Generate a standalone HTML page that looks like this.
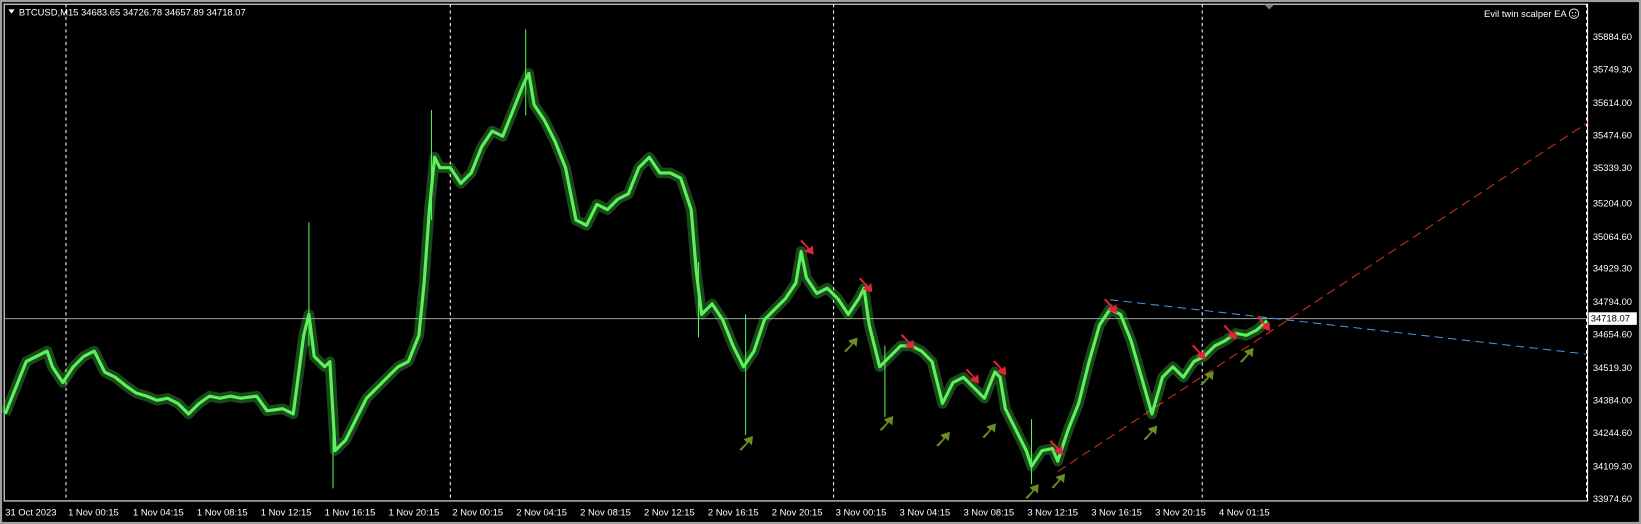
<!DOCTYPE html>
<html><head><meta charset="utf-8"><style>
html,body{margin:0;padding:0;background:#000;overflow:hidden}
svg{display:block}
text{font-family:"Liberation Sans",sans-serif;font-size:9px;fill:#fff}
</style></head><body>
<svg width="1641" height="524" viewBox="0 0 1567 500" preserveAspectRatio="none" xmlns="http://www.w3.org/2000/svg">
<defs>
<polygon id="up" points="-6,7 1,0 -2,-3 7,-6 6,3 3,0 -4,8" fill="#6b8e23"/>
<polygon id="dn" points="-6,-7 1,0 -2,3 7,6 6,-3 3,0 -4,-8" fill="#e8203c"/>
</defs>
<rect x="0" y="0" width="1567" height="500" fill="#000"/>
<rect x="0" y="0" width="1567" height="2" fill="#a0a0a0"/>
<rect x="0" y="0" width="2" height="500" fill="#a0a0a0"/>
<rect x="1565" y="0" width="2" height="500" fill="#a0a0a0"/>
<rect x="0" y="498" width="1567" height="2" fill="#a0a0a0"/>
<rect x="4" y="4" width="1512" height="474" fill="none" stroke="#fff" stroke-width="1"/>
<g stroke="#fff" stroke-width="1" stroke-dasharray="3,3">
<line x1="63" y1="4" x2="63" y2="478"/><line x1="430" y1="4" x2="430" y2="478"/>
<line x1="796" y1="4" x2="796" y2="478"/><line x1="1148" y1="4" x2="1148" y2="478"/>
<line x1="1515" y1="4" x2="1515" y2="478"/>
</g>
<polygon points="1207,4 1217,4 1212,9" fill="#708090"/>
<line x1="4" y1="304" x2="1516" y2="304" stroke="#a0a0a0" stroke-width="1"/>
<line x1="1060" y1="286" x2="1516" y2="338" stroke="#4a90e2" stroke-width="1" stroke-dasharray="8,5"/>
<line x1="1010" y1="450" x2="1516" y2="117" stroke="#d03020" stroke-width="1" stroke-dasharray="9,5"/>
<g stroke="#55f055" stroke-width="1">
<line x1="295" y1="212" x2="295" y2="330"/><line x1="318" y1="380" x2="318" y2="466"/>
<line x1="502" y1="28" x2="502" y2="110"/><line x1="712" y1="300" x2="712" y2="415"/>
<line x1="845" y1="330" x2="845" y2="398"/><line x1="985" y1="400" x2="985" y2="462"/>
<line x1="667" y1="250" x2="667" y2="322"/><line x1="412" y1="105" x2="412" y2="210"/>
</g>
<polyline fill="none" stroke="#55f055" stroke-width="10" stroke-opacity="0.3" stroke-linejoin="round" points="5,395 15,370 25,345 35,340 45,335 50,350 60,365 70,350 80,340 90,335 100,355 110,360 120,368 130,375 140,378 150,382 160,380 170,385 180,395 190,385 200,378 210,380 220,378 230,380 245,378 255,392 270,390 280,395 290,320 295,300 300,340 310,350 315,345 320,430 330,420 340,400 350,380 360,370 370,360 380,350 390,345 400,320 405,270 410,200 415,150 420,160 430,160 440,175 450,165 460,140 470,125 480,130 490,105 500,80 505,70 510,100 520,115 530,135 540,160 550,210 560,215 570,195 580,200 590,190 600,185 610,160 620,150 630,165 640,165 650,170 660,200 665,260 670,300 680,290 690,305 700,330 710,350 720,335 730,305 740,295 750,285 760,270 765,240 770,265 780,280 790,275 800,285 810,300 820,285 825,275 830,310 840,350 850,340 860,330 870,330 880,335 890,345 900,385 910,365 920,360 930,370 940,380 950,355 955,360 960,390 970,410 980,430 985,445 995,430 1005,428 1010,440 1020,410 1030,385 1040,345 1050,310 1060,295 1070,300 1080,325 1090,360 1100,395 1110,360 1120,350 1130,360 1140,345 1150,340 1160,330 1170,325 1180,318 1190,320 1200,315 1210,306"/>
<polyline fill="none" stroke="#5cf25c" stroke-width="3" stroke-linejoin="round" points="5,395 15,370 25,345 35,340 45,335 50,350 60,365 70,350 80,340 90,335 100,355 110,360 120,368 130,375 140,378 150,382 160,380 170,385 180,395 190,385 200,378 210,380 220,378 230,380 245,378 255,392 270,390 280,395 290,320 295,300 300,340 310,350 315,345 320,430 330,420 340,400 350,380 360,370 370,360 380,350 390,345 400,320 405,270 410,200 415,150 420,160 430,160 440,175 450,165 460,140 470,125 480,130 490,105 500,80 505,70 510,100 520,115 530,135 540,160 550,210 560,215 570,195 580,200 590,190 600,185 610,160 620,150 630,165 640,165 650,170 660,200 665,260 670,300 680,290 690,305 700,330 710,350 720,335 730,305 740,295 750,285 760,270 765,240 770,265 780,280 790,275 800,285 810,300 820,285 825,275 830,310 840,350 850,340 860,330 870,330 880,335 890,345 900,385 910,365 920,360 930,370 940,380 950,355 955,360 960,390 970,410 980,430 985,445 995,430 1005,428 1010,440 1020,410 1030,385 1040,345 1050,310 1060,295 1070,300 1080,325 1090,360 1100,395 1110,360 1120,350 1130,360 1140,345 1150,340 1160,330 1170,325 1180,318 1190,320 1200,315 1210,306"/>
<use href="#dn" x="770" y="237"/><use href="#dn" x="826" y="273"/><use href="#dn" x="866" y="327"/>
<use href="#dn" x="928" y="360"/><use href="#dn" x="954" y="352"/><use href="#dn" x="1008" y="428"/>
<use href="#dn" x="1060" y="293"/><use href="#dn" x="1144" y="337"/><use href="#dn" x="1174" y="318"/><use href="#dn" x="1206" y="310"/>
<use href="#up" x="712" y="422"/><use href="#up" x="812" y="328"/><use href="#up" x="846" y="403"/>
<use href="#up" x="900" y="418"/><use href="#up" x="944" y="410"/><use href="#up" x="985" y="468"/>
<use href="#up" x="1010" y="458"/><use href="#up" x="1098" y="412"/><use href="#up" x="1152" y="360"/><use href="#up" x="1190" y="338"/>
<polygon points="8,9 14,9 11,13" fill="#fff"/>
<text x="18" y="15">BTCUSD,M15  34683.65 34726.78 34657.89 34718.07</text>
<text x="1496" y="16" text-anchor="end">Evil twin scalper EA</text>
<circle cx="1503" cy="13" r="4.5" fill="none" stroke="#fff" stroke-width="0.8"/>
<circle cx="1501.5" cy="12" r="0.6" fill="#fff"/><circle cx="1504.5" cy="12" r="0.6" fill="#fff"/>
<path d="M1501 14.5 Q1503 16.5 1505 14.5" fill="none" stroke="#fff" stroke-width="0.6"/>
<g font-size="9">
<text x="1521" y="38">35884.60</text><text x="1521" y="69">35749.30</text><text x="1521" y="101">35614.00</text>
<text x="1521" y="132">35474.60</text><text x="1521" y="163">35339.30</text><text x="1521" y="197">35204.00</text>
<text x="1521" y="229">35064.60</text><text x="1521" y="259">34929.30</text><text x="1521" y="291">34794.00</text>
<text x="1521" y="322">34654.60</text><text x="1521" y="354">34519.30</text><text x="1521" y="385">34384.00</text>
<text x="1521" y="416">34244.60</text><text x="1521" y="448">34109.30</text><text x="1521" y="479">33974.60</text>
</g>
<rect x="1517" y="298" width="46" height="12" fill="#fff"/>
<text x="1519" y="307" style="fill:#000">34718.07</text>
<g style="font-size:9px">
<text x="5" y="492">31 Oct 2023</text><text x="65" y="492">1 Nov 00:15</text><text x="127" y="492">1 Nov 04:15</text>
<text x="188" y="492">1 Nov 08:15</text><text x="249" y="492">1 Nov 12:15</text><text x="310" y="492">1 Nov 16:15</text>
<text x="371" y="492">1 Nov 20:15</text><text x="432" y="492">2 Nov 00:15</text><text x="493" y="492">2 Nov 04:15</text>
<text x="554" y="492">2 Nov 08:15</text><text x="615" y="492">2 Nov 12:15</text><text x="676" y="492">2 Nov 16:15</text>
<text x="737" y="492">2 Nov 20:15</text><text x="798" y="492">3 Nov 00:15</text><text x="859" y="492">3 Nov 04:15</text>
<text x="920" y="492">3 Nov 08:15</text><text x="981" y="492">3 Nov 12:15</text><text x="1042" y="492">3 Nov 16:15</text>
<text x="1103" y="492">3 Nov 20:15</text><text x="1164" y="492">4 Nov 01:15</text>
</g>
</svg>
</body></html>
